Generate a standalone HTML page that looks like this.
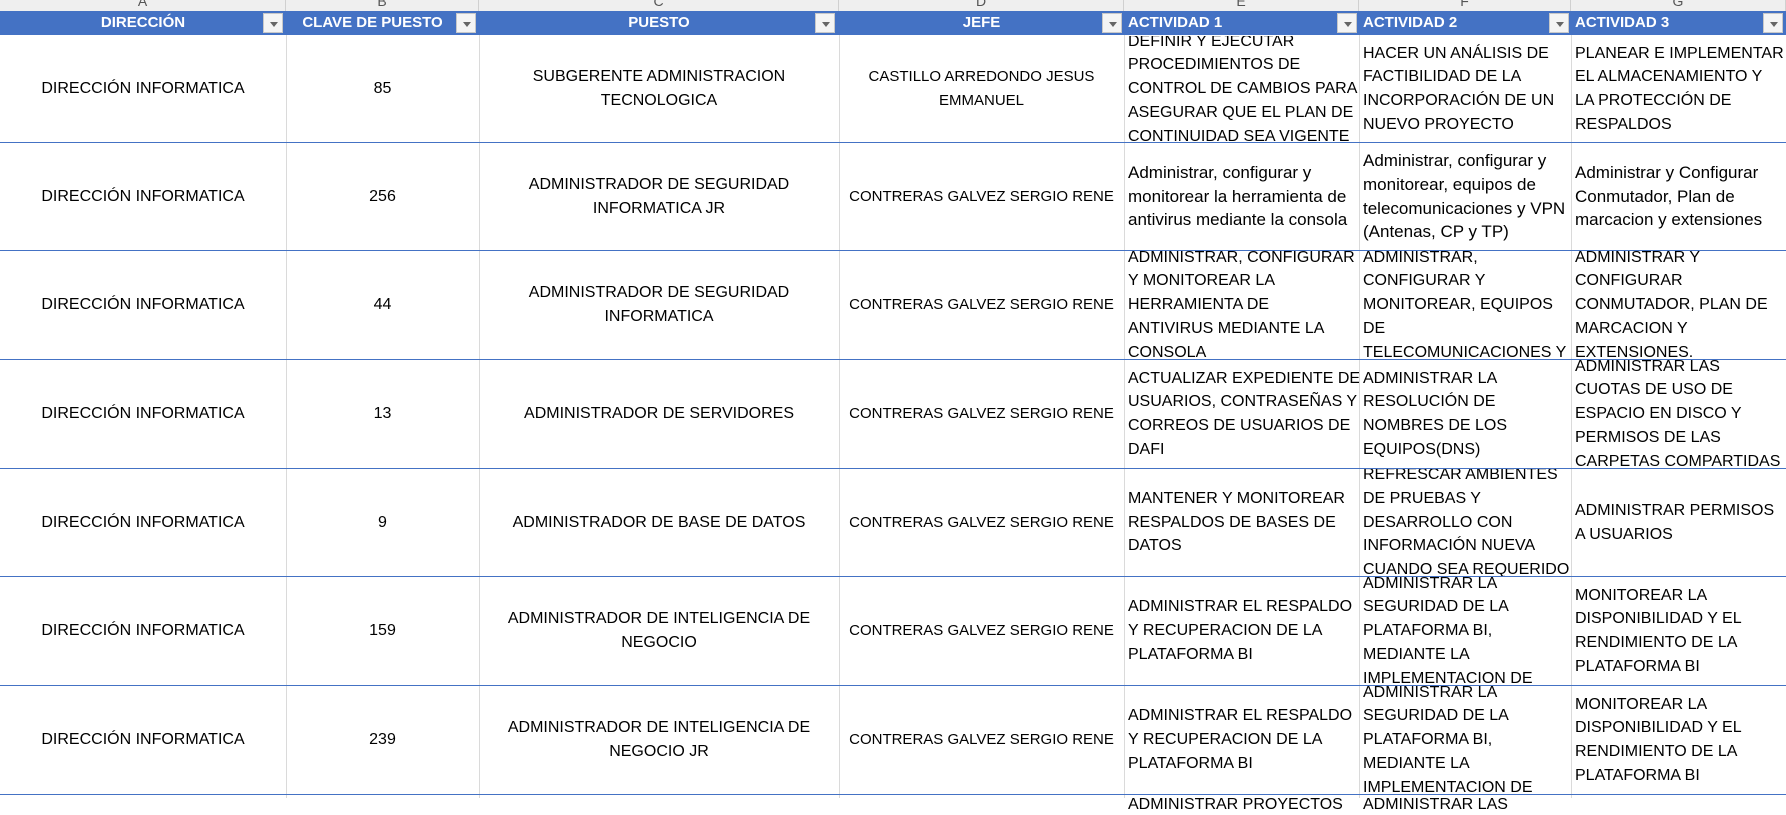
<!DOCTYPE html>
<html><head><meta charset="utf-8"><style>
*{margin:0;padding:0;box-sizing:border-box}
body{width:1786px;height:798px;overflow:hidden;background:#fff;position:relative;font-family:"Liberation Sans",Arial,sans-serif;font-size:16px;color:#000}
.colh{position:absolute;top:0;height:11px;background:#efefef;border-right:1px solid #d0d0d0;overflow:hidden;text-align:center;color:#555;font-size:14px;line-height:3px}
.hb{position:absolute;top:11px;height:24px;background:#4472c4;color:#fff;font-weight:bold;font-size:15px;line-height:24px;white-space:nowrap;overflow:hidden}
.fb{position:absolute;top:13px;width:20px;height:20px;background:#f4f4f4;border:1px solid #c8c8c8}
.fb:after{content:"";position:absolute;left:6px;top:8px;border-left:4px solid transparent;border-right:4px solid transparent;border-top:5px solid #666}
.vl{position:absolute;top:35px;bottom:0;width:1px;background:#dadada}
.hl{position:absolute;left:0;width:1786px;height:1px;background:#4472c4}
.c{position:absolute;display:flex;align-items:center;overflow:hidden;line-height:23.7px;white-space:nowrap}
.m{justify-content:center;text-align:center}
.l{padding-left:4px}
.d{font-size:15px}
.lc{font-size:17px}
.l>div,.m>div{flex:none}
</style></head><body>
<div class="colh" style="left:0;width:286px">A</div>
<div class="colh" style="left:286px;width:193px">B</div>
<div class="colh" style="left:479px;width:360px">C</div>
<div class="colh" style="left:839px;width:285px">D</div>
<div class="colh" style="left:1124px;width:235px">E</div>
<div class="colh" style="left:1359px;width:212px">F</div>
<div class="colh" style="left:1571px;width:215px">G</div>

<div class="hb" style="left:0;width:286px;text-align:center">DIRECCIÓN</div>
<div class="hb" style="left:286px;width:193px;text-align:center;padding-right:20px">CLAVE DE PUESTO</div>
<div class="hb" style="left:479px;width:360px;text-align:center">PUESTO</div>
<div class="hb" style="left:839px;width:285px;text-align:center">JEFE</div>
<div class="hb" style="left:1124px;width:235px;padding-left:4px">ACTIVIDAD 1</div>
<div class="hb" style="left:1359px;width:212px;padding-left:4px">ACTIVIDAD 2</div>
<div class="hb" style="left:1571px;width:215px;padding-left:4px">ACTIVIDAD 3</div>
<div class="fb" style="left:263px"></div>
<div class="fb" style="left:456px"></div>
<div class="fb" style="left:815px"></div>
<div class="fb" style="left:1102px"></div>
<div class="fb" style="left:1337px"></div>
<div class="fb" style="left:1549px"></div>
<div class="fb" style="left:1763px"></div>

<div class="vl" style="left:286px"></div>
<div class="vl" style="left:479px"></div>
<div class="vl" style="left:839px"></div>
<div class="vl" style="left:1124px"></div>
<div class="vl" style="left:1359px"></div>
<div class="vl" style="left:1571px"></div>

<div class="hl" style="top:142px"></div>
<div class="hl" style="top:250px"></div>
<div class="hl" style="top:359px"></div>
<div class="hl" style="top:468px"></div>
<div class="hl" style="top:576px"></div>
<div class="hl" style="top:685px"></div>
<div class="hl" style="top:794px"></div>

<!-- Row 1 -->
<div class="c m" style="left:0;width:286px;top:36px;height:106px"><div>DIRECCIÓN INFORMATICA</div></div>
<div class="c m" style="left:286px;width:193px;top:36px;height:106px"><div>85</div></div>
<div class="c m" style="left:479px;width:360px;top:36px;height:106px"><div>SUBGERENTE ADMINISTRACION<br>TECNOLOGICA</div></div>
<div class="c m d" style="left:839px;width:285px;top:36px;height:106px"><div>CASTILLO ARREDONDO JESUS<br>EMMANUEL</div></div>
<div class="c l" style="left:1124px;width:235px;top:36px;height:106px"><div>DEFINIR Y EJECUTAR<br>PROCEDIMIENTOS DE<br>CONTROL DE CAMBIOS PARA<br>ASEGURAR QUE EL PLAN DE<br>CONTINUIDAD SEA VIGENTE</div></div>
<div class="c l" style="left:1359px;width:212px;top:36px;height:106px"><div>HACER UN ANÁLISIS DE<br>FACTIBILIDAD DE LA<br>INCORPORACIÓN DE UN<br>NUEVO PROYECTO</div></div>
<div class="c l" style="left:1571px;width:215px;top:36px;height:106px"><div>PLANEAR E IMPLEMENTAR<br>EL ALMACENAMIENTO Y<br>LA PROTECCIÓN DE<br>RESPALDOS</div></div>

<!-- Row 2 -->
<div class="c m" style="left:0;width:286px;top:143px;height:107px"><div>DIRECCIÓN INFORMATICA</div></div>
<div class="c m" style="left:286px;width:193px;top:143px;height:107px"><div>256</div></div>
<div class="c m" style="left:479px;width:360px;top:143px;height:107px"><div>ADMINISTRADOR DE SEGURIDAD<br>INFORMATICA JR</div></div>
<div class="c m d" style="left:839px;width:285px;top:143px;height:107px"><div>CONTRERAS GALVEZ SERGIO RENE</div></div>
<div class="c l lc" style="left:1124px;width:235px;top:143px;height:107px"><div>Administrar, configurar y<br>monitorear la herramienta de<br>antivirus mediante la consola</div></div>
<div class="c l lc" style="left:1359px;width:212px;top:143px;height:107px"><div>Administrar, configurar y<br>monitorear, equipos de<br>telecomunicaciones y VPN<br>(Antenas, CP y TP)</div></div>
<div class="c l lc" style="left:1571px;width:215px;top:143px;height:107px"><div>Administrar y Configurar<br>Conmutador, Plan de<br>marcacion y extensiones</div></div>

<!-- Row 3 -->
<div class="c m" style="left:0;width:286px;top:251px;height:108px"><div>DIRECCIÓN INFORMATICA</div></div>
<div class="c m" style="left:286px;width:193px;top:251px;height:108px"><div>44</div></div>
<div class="c m" style="left:479px;width:360px;top:251px;height:108px"><div>ADMINISTRADOR DE SEGURIDAD<br>INFORMATICA</div></div>
<div class="c m d" style="left:839px;width:285px;top:251px;height:108px"><div>CONTRERAS GALVEZ SERGIO RENE</div></div>
<div class="c l" style="left:1124px;width:235px;top:251px;height:108px"><div>ADMINISTRAR, CONFIGURAR<br>Y MONITOREAR LA<br>HERRAMIENTA DE<br>ANTIVIRUS MEDIANTE LA<br>CONSOLA</div></div>
<div class="c l" style="left:1359px;width:212px;top:251px;height:108px"><div>ADMINISTRAR,<br>CONFIGURAR Y<br>MONITOREAR, EQUIPOS<br>DE<br>TELECOMUNICACIONES Y</div></div>
<div class="c l" style="left:1571px;width:215px;top:251px;height:108px"><div>ADMINISTRAR Y<br>CONFIGURAR<br>CONMUTADOR, PLAN DE<br>MARCACION Y<br>EXTENSIONES.</div></div>

<!-- Row 4 -->
<div class="c m" style="left:0;width:286px;top:360px;height:108px"><div>DIRECCIÓN INFORMATICA</div></div>
<div class="c m" style="left:286px;width:193px;top:360px;height:108px"><div>13</div></div>
<div class="c m" style="left:479px;width:360px;top:360px;height:108px"><div>ADMINISTRADOR DE SERVIDORES</div></div>
<div class="c m d" style="left:839px;width:285px;top:360px;height:108px"><div>CONTRERAS GALVEZ SERGIO RENE</div></div>
<div class="c l" style="left:1124px;width:235px;top:360px;height:108px"><div>ACTUALIZAR EXPEDIENTE DE<br>USUARIOS, CONTRASEÑAS Y<br>CORREOS DE USUARIOS DE<br>DAFI</div></div>
<div class="c l" style="left:1359px;width:212px;top:360px;height:108px"><div>ADMINISTRAR LA<br>RESOLUCIÓN DE<br>NOMBRES DE LOS<br>EQUIPOS(DNS)</div></div>
<div class="c l" style="left:1571px;width:215px;top:360px;height:108px"><div>ADMINISTRAR LAS<br>CUOTAS DE USO DE<br>ESPACIO EN DISCO Y<br>PERMISOS DE LAS<br>CARPETAS COMPARTIDAS</div></div>

<!-- Row 5 -->
<div class="c m" style="left:0;width:286px;top:469px;height:107px"><div>DIRECCIÓN INFORMATICA</div></div>
<div class="c m" style="left:286px;width:193px;top:469px;height:107px"><div>9</div></div>
<div class="c m" style="left:479px;width:360px;top:469px;height:107px"><div>ADMINISTRADOR DE BASE DE DATOS</div></div>
<div class="c m d" style="left:839px;width:285px;top:469px;height:107px"><div>CONTRERAS GALVEZ SERGIO RENE</div></div>
<div class="c l" style="left:1124px;width:235px;top:469px;height:107px"><div>MANTENER Y MONITOREAR<br>RESPALDOS DE BASES DE<br>DATOS</div></div>
<div class="c l" style="left:1359px;width:212px;top:469px;height:107px"><div>REFRESCAR AMBIENTES<br>DE PRUEBAS Y<br>DESARROLLO CON<br>INFORMACIÓN NUEVA<br>CUANDO SEA REQUERIDO</div></div>
<div class="c l" style="left:1571px;width:215px;top:469px;height:107px"><div>ADMINISTRAR PERMISOS<br>A USUARIOS</div></div>

<!-- Row 6 -->
<div class="c m" style="left:0;width:286px;top:577px;height:108px"><div>DIRECCIÓN INFORMATICA</div></div>
<div class="c m" style="left:286px;width:193px;top:577px;height:108px"><div>159</div></div>
<div class="c m" style="left:479px;width:360px;top:577px;height:108px"><div>ADMINISTRADOR DE INTELIGENCIA DE<br>NEGOCIO</div></div>
<div class="c m d" style="left:839px;width:285px;top:577px;height:108px"><div>CONTRERAS GALVEZ SERGIO RENE</div></div>
<div class="c l" style="left:1124px;width:235px;top:577px;height:108px"><div>ADMINISTRAR EL RESPALDO<br>Y RECUPERACION DE LA<br>PLATAFORMA BI</div></div>
<div class="c l" style="left:1359px;width:212px;top:577px;height:108px"><div>ADMINISTRAR LA<br>SEGURIDAD DE LA<br>PLATAFORMA BI,<br>MEDIANTE LA<br>IMPLEMENTACION DE</div></div>
<div class="c l" style="left:1571px;width:215px;top:577px;height:108px"><div>MONITOREAR LA<br>DISPONIBILIDAD Y EL<br>RENDIMIENTO DE LA<br>PLATAFORMA BI</div></div>

<!-- Row 7 -->
<div class="c m" style="left:0;width:286px;top:686px;height:108px"><div>DIRECCIÓN INFORMATICA</div></div>
<div class="c m" style="left:286px;width:193px;top:686px;height:108px"><div>239</div></div>
<div class="c m" style="left:479px;width:360px;top:686px;height:108px"><div>ADMINISTRADOR DE INTELIGENCIA DE<br>NEGOCIO JR</div></div>
<div class="c m d" style="left:839px;width:285px;top:686px;height:108px"><div>CONTRERAS GALVEZ SERGIO RENE</div></div>
<div class="c l" style="left:1124px;width:235px;top:686px;height:108px"><div>ADMINISTRAR EL RESPALDO<br>Y RECUPERACION DE LA<br>PLATAFORMA BI</div></div>
<div class="c l" style="left:1359px;width:212px;top:686px;height:108px"><div>ADMINISTRAR LA<br>SEGURIDAD DE LA<br>PLATAFORMA BI,<br>MEDIANTE LA<br>IMPLEMENTACION DE</div></div>
<div class="c l" style="left:1571px;width:215px;top:686px;height:108px"><div>MONITOREAR LA<br>DISPONIBILIDAD Y EL<br>RENDIMIENTO DE LA<br>PLATAFORMA BI</div></div>

<!-- Row 8 partial -->
<div class="c l" style="left:1124px;width:235px;top:795px;height:20px;align-items:flex-start"><div style="margin-top:-2px">ADMINISTRAR PROYECTOS</div></div>
<div class="c l" style="left:1359px;width:212px;top:795px;height:20px;align-items:flex-start"><div style="margin-top:-2px">ADMINISTRAR LAS</div></div>
</body></html>
